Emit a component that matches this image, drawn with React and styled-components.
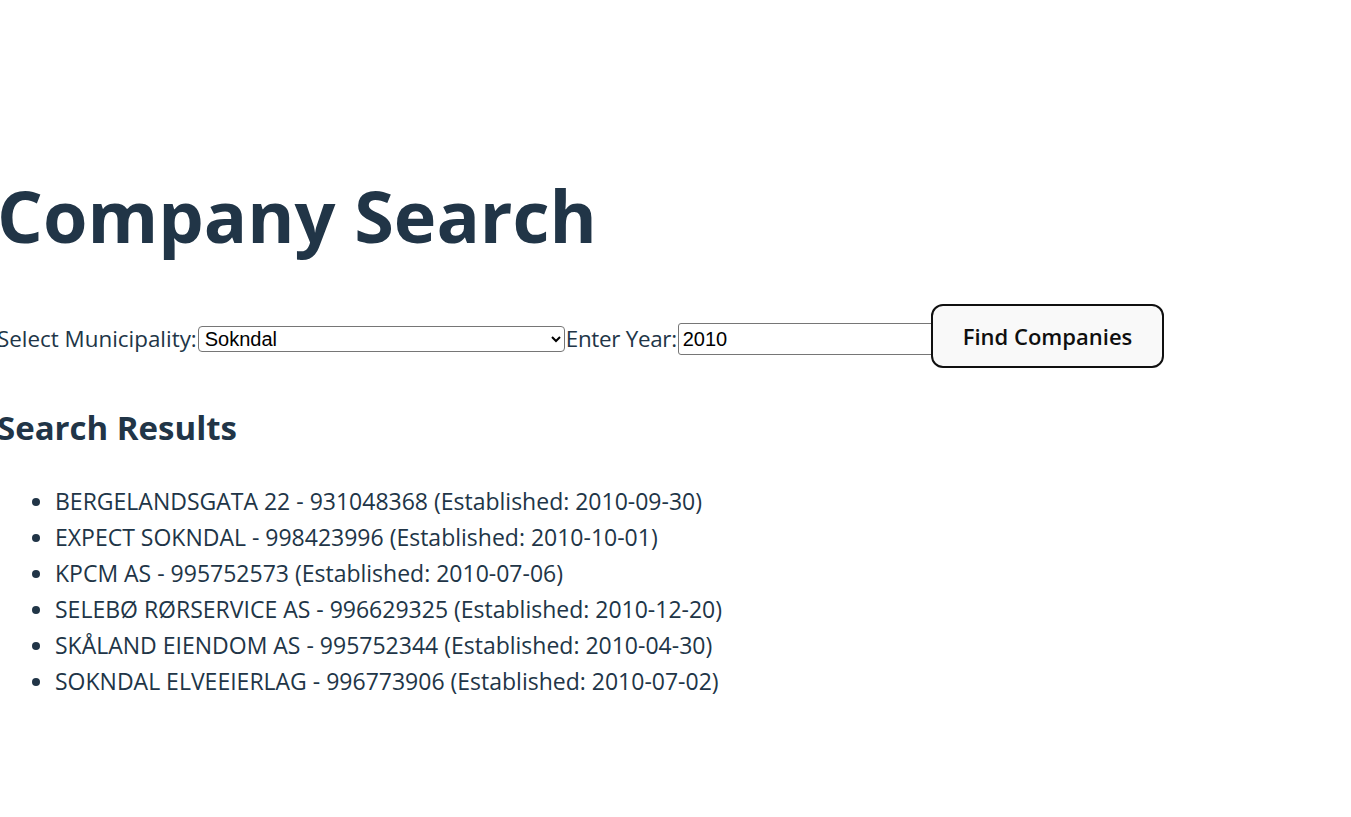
import React, { useState } from "react";
import styled, { createGlobalStyle } from "styled-components";

const GlobalStyle = createGlobalStyle`
  body {
    margin: 0;
    background: #ffffff;
    color: #213547;
    font-family: "Segoe UI", "Open Sans", "Noto Sans", sans-serif;
    font-size: 23px;
    line-height: 1.5;
  }
`;

const Page = styled.div`
  padding-top: 176px;
  margin-left: -3px;
`;

const Title = styled.h1`
  margin: 0 0 55px;
  font-size: 72px;
  line-height: 1.1;
  font-weight: 700;
`;

const SearchForm = styled.form`
  display: flex;
  align-items: center;
`;

const Label = styled.label`
  white-space: nowrap;
  font-size: 22.4px;
  letter-spacing: ${(p) => (p.$tight ? "-0.3px" : "0")};
`;

const Select = styled.select`
  box-sizing: border-box;
  width: 367px;
  height: 26px;
  margin: 0 1px;
  padding: 0 2px;
  font-family: "Liberation Sans", Arial, sans-serif;
  font-size: 20px;
  color: #000;
  background: #fff;
  border: 1px solid #767676;
  border-radius: 4px;
`;

const Input = styled.input`
  box-sizing: border-box;
  width: 256px;
  height: 32px;
  margin: 0 0 0 1px;
  padding: 0 4px;
  font-family: "Liberation Sans", Arial, sans-serif;
  font-size: 20px;
  color: #000;
  border: 1px solid #767676;
  border-radius: 3px;
`;

const Button = styled.button`
  box-sizing: border-box;
  height: 64px;
  margin: -6px 0 0 -3px;
  padding: 0 30px;
  font-family: inherit;
  font-size: 22px;
  font-weight: 600;
  color: #0f0f0f;
  background: #f9f9f9;
  border: 2.5px solid #101010;
  border-radius: 12px;
  cursor: pointer;
`;

const Subtitle = styled.h2`
  margin: 35px 0 0;
  font-size: 33px;
  line-height: 1.5;
  font-weight: 700;
`;

const Results = styled.ul`
  margin: 30px 0 0;
  padding-left: 58px;
`;

const Result = styled.li`
  line-height: 36px;
`;

const companies = [
  { name: "BERGELANDSGATA 22", org: "931048368", date: "2010-09-30" },
  { name: "EXPECT SOKNDAL", org: "998423996", date: "2010-10-01" },
  { name: "KPCM AS", org: "995752573", date: "2010-07-06" },
  { name: "SELEBØ RØRSERVICE AS", org: "996629325", date: "2010-12-20" },
  { name: "SKÅLAND EIENDOM AS", org: "995752344", date: "2010-04-30" },
  { name: "SOKNDAL ELVEEIERLAG", org: "996773906", date: "2010-07-02" },
];

const App = () => {
  const [municipality, setMunicipality] = useState("Sokndal");
  const [year, setYear] = useState("2010");

  return (
    <Page>
      <GlobalStyle />
      <Title>Company Search</Title>
      <SearchForm onSubmit={(e) => e.preventDefault()}>
        <Label htmlFor="municipality">Select Municipality:</Label>
        <Select
          id="municipality"
          value={municipality}
          onChange={(e) => setMunicipality(e.target.value)}
        >
          <option>Sokndal</option>
          <option>Eigersund</option>
          <option>Lund</option>
        </Select>
        <Label htmlFor="year" $tight>
          Enter Year:
        </Label>
        <Input
          id="year"
          type="text"
          value={year}
          onChange={(e) => setYear(e.target.value)}
        />
        <Button type="submit">Find Companies</Button>
      </SearchForm>
      <Subtitle>Search Results</Subtitle>
      <Results>
        {companies.map((c) => (
          <Result key={c.org}>
            {c.name} - {c.org} (Established: {c.date})
          </Result>
        ))}
      </Results>
    </Page>
  );
};

export default App;
